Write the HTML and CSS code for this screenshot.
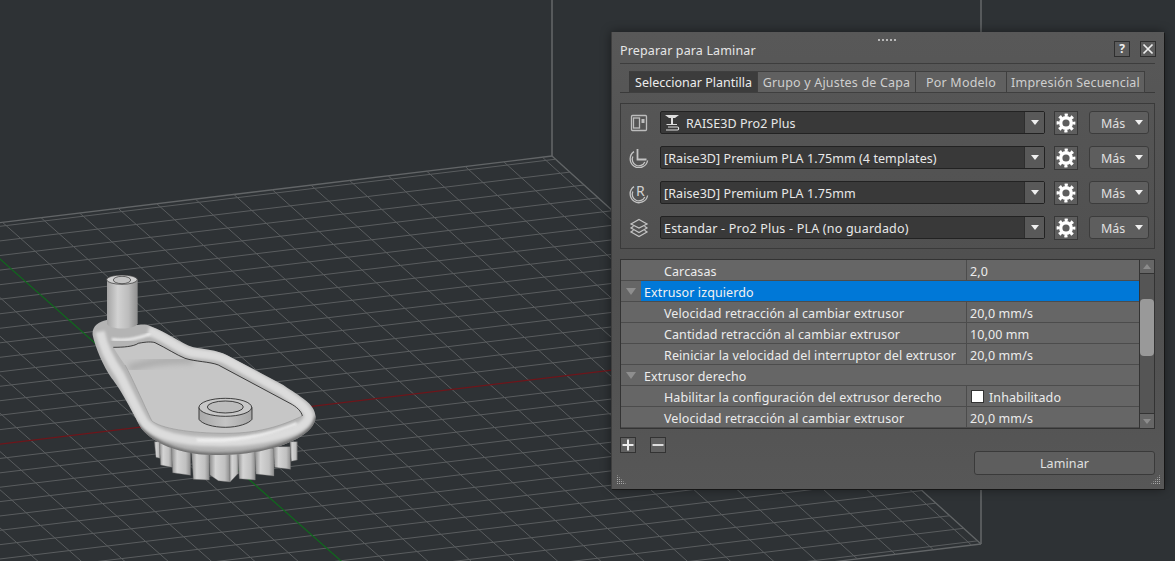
FILE: index.html
```html
<!DOCTYPE html>
<html lang="es">
<head>
<meta charset="utf-8">
<title>Preparar para Laminar</title>
<link rel="stylesheet" href="styles.css">
</head>
<body>
<svg class="scene" width="1175" height="561" viewBox="0 0 1175 561" xmlns="http://www.w3.org/2000/svg">
  <defs>
    <filter id="b2"><feGaussianBlur stdDeviation="3"/></filter>
    <filter id="b5"><feGaussianBlur stdDeviation="5"/></filter>
    <filter id="b9"><feGaussianBlur stdDeviation="9"/></filter>
    <linearGradient id="cyl" x1="0" x2="1" y1="0" y2="0">
      <stop offset="0" stop-color="#a4a4a4"/><stop offset=".35" stop-color="#d2d2d2"/><stop offset=".7" stop-color="#bcbcbc"/><stop offset="1" stop-color="#8e8e8e"/>
    </linearGradient>
    <linearGradient id="boss" x1="0" x2="1" y1="0" y2="0">
      <stop offset="0" stop-color="#a8a8a8"/><stop offset=".5" stop-color="#c4c4c4"/><stop offset="1" stop-color="#a6a6a6"/>
    </linearGradient>
    <linearGradient id="tooth" x1="0" x2="1" y1="0" y2="0">
      <stop offset="0" stop-color="#8a8a8a"/><stop offset=".3" stop-color="#d4d4d4"/><stop offset=".75" stop-color="#c0c0c0"/><stop offset="1" stop-color="#8c8c8c"/>
    </linearGradient>
    <clipPath id="rimclip"><path d="M110 180C85 185 65 200 68 225C75 260 100 320 125 355C150 385 190 460 205 490C225 535 310 585 430 585C570 590 735 540 737 470C735 430 690 410 640 375L470 285C440 270 400 268 370 262C330 250 290 215 240 198C225 190 205 195 200 195Z"/></clipPath>
  </defs>

  <g id="grid"></g>
  <g class="wall">
    <line x1="552" y1="0" x2="552" y2="156"/>
    <line x1="981" y1="0" x2="981" y2="544"/>
  </g>

  <g class="part" transform="translate(70 260) scale(.3333)">
    <g class="teeth">
      <path d="M253 545H270V595L258 592Z"/>
      <path d="M268 550H306V622L272 615Z"/>
      <path d="M304 560H362V646L308 638Z"/>
      <path d="M364 565H418V660L370 658Z"/>
      <path d="M418 570H480V666L445 662L420 645Z"/>
      <path d="M478 570H505V640L480 666Z"/>
      <path d="M503 570H556V660L508 656Z"/>
      <path d="M554 565H612V648L558 642Z"/>
      <path d="M610 560H662V628L614 622Z"/>
      <path d="M660 545H682V600L664 604Z"/>
    </g>
    <path class="rim-base" d="M110 180C85 185 65 200 68 225C75 260 100 320 125 355C150 385 190 460 205 490C225 535 310 585 430 585C570 590 735 540 737 470C735 430 690 410 640 375L470 285C440 270 400 268 370 262C330 250 290 215 240 198C225 190 205 195 200 195Z"/>
    <g clip-path="url(#rimclip)">
      <path class="rim-dark" filter="url(#b5)" d="M205 490C225 535 310 585 430 585C570 590 735 540 737 470"/>
      <path class="rim-light" filter="url(#b5)" d="M90 215C100 265 125 310 150 345C175 395 200 450 225 490C260 525 330 545 430 545C560 550 705 520 717 470C712 440 680 425 640 395L470 300C430 280 390 285 360 277C320 265 280 225 235 212"/>
      <path class="rim-glint" filter="url(#b2)" d="M380 540C470 545 570 535 680 490"/>
      <path class="rim-glint" filter="url(#b2)" d="M125 238C160 243 190 240 240 222"/>
    </g>
    <path class="floor" d="M130 262C160 262 190 260 205 250C230 245 245 245 255 248C290 265 320 285 345 295C375 305 420 305 445 315L660 430C680 440 695 455 697 468C650 490 580 520 470 520C360 520 270 505 245 482C225 440 180 340 165 315C155 300 140 280 130 262Z"/>
    <path class="floor-band" filter="url(#b9)" d="M175 325C230 308 300 298 370 300"/>
    <path class="edge" d="M130 262C160 262 190 260 205 250C230 245 245 245 255 248C290 265 320 285 345 295C375 305 420 305 445 315L660 430C680 440 695 455 697 468"/>
    <path class="edge-thin" d="M697 468C650 490 580 520 470 520C360 520 270 505 245 482C225 440 180 340 165 315"/>

    <path class="boss-side" d="M387 442V478C395 492 430 502 466 502C505 502 538 490 546 478V442Z"/>
    <ellipse class="boss-top" cx="466" cy="442" rx="79" ry="27"/>
    <ellipse class="boss-hole" cx="466" cy="441" rx="54" ry="18"/>

    <path class="cyl-side" d="M111 58V192C120 210 190 210 203 192V58Z"/>
    <ellipse class="cyl-top" cx="156" cy="59" rx="46" ry="14"/>
    <ellipse class="cyl-hole" cx="156" cy="60" rx="26" ry="11"/>
  </g>
</svg>

<svg class="defs" width="0" height="0" xmlns="http://www.w3.org/2000/svg">
  <symbol id="gear" viewBox="0 0 20 20">
    <circle cx="10" cy="10" r="5.3" fill="none" stroke="#fff" stroke-width="3.4"/>
    <circle cx="10" cy="10" r="7.9" fill="none" stroke="#fff" stroke-width="3" stroke-dasharray="3.1 3.1" stroke-dashoffset="1.55"/>
  </symbol>
</svg>

<section class="dialog">
  <div class="handle"></div>
  <header class="titlebar">
    <h1 class="title">Preparar para Laminar</h1>
    <div class="winbtns">
      <button class="winbtn">?</button>
      <button class="winbtn winbtn-close">
        <svg width="12" height="12" viewBox="0 0 12 12"><path d="M1.5 1.5L10.500 10.500M10.500 1.500L1.500 10.500" stroke="#eee" stroke-width="1.7"/></svg>
      </button>
    </div>
  </header>

  <nav class="tabs">
    <a class="tab tab-on tab-1">Seleccionar Plantilla</a>
    <a class="tab tab-2">Grupo y Ajustes de Capa</a>
    <a class="tab tab-3">Por Modelo</a>
    <a class="tab tab-4">Impresión Secuencial</a>
  </nav>

  <div class="group">
    <div class="prow">
      <svg class="picon picon-box" width="18" height="18" viewBox="0 0 18 18">
        <rect x="1.500" y="1.500" width="15" height="15" rx="1" fill="none" stroke="#bdbdbd" stroke-width="1.300"/>
        <rect x="3.500" y="4" width="6" height="10" fill="none" stroke="#bdbdbd" stroke-width="1.300"/>
        <rect x="11.500" y="5" width="3" height="4" fill="#bdbdbd"/>
      </svg>
      <div class="combo">
        <svg class="printer" width="16" height="18" viewBox="0 0 16 18">
          <path d="M1 1H15L11 4H9V10H7V4H5Z" fill="#ddd"/>
          <path d="M2.500 10.500H13M4 13H13.500C15 13 15 16 13.500 16H2" fill="none" stroke="#ddd" stroke-width="1.200"/>
        </svg>
        <span class="combo-text">RAISE3D Pro2 Plus</span>
        <span class="combo-arrow"><i class="tri"></i></span>
      </div>
      <button class="gearbtn"><svg width="20" height="20"><use href="#gear"/></svg></button>
      <button class="more"><span class="more-text">Más</span><i class="tri"></i></button>
    </div>
    <div class="prow">
      <svg class="picon" width="20" height="20" viewBox="0 0 20 20">
        <path d="M5 3.600A8.800 8.800 0 1 0 18.600 12.500" fill="none" stroke="#c4c4c4" stroke-width="1.300"/>
        <path d="M3.800 8.500A6.400 6.400 0 0 0 15.800 14" fill="none" stroke="#c4c4c4" stroke-width="1.300"/>
        <path d="M8.500 1V11.500H17.500" fill="none" stroke="#c4c4c4" stroke-width="1.800"/>
      </svg>
      <div class="combo"><span class="combo-text">[Raise3D] Premium PLA 1.75mm (4 templates)</span><span class="combo-arrow"><i class="tri"></i></span></div>
      <button class="gearbtn"><svg width="20" height="20"><use href="#gear"/></svg></button>
      <button class="more"><span class="more-text">Más</span><i class="tri"></i></button>
    </div>
    <div class="prow">
      <svg class="picon picon-tall" width="20" height="28" viewBox="0 -4 20 28">
        <path d="M5 3.600A8.800 8.800 0 1 0 18.600 12.500" fill="none" stroke="#c4c4c4" stroke-width="1.300"/>
        <path d="M3.800 8.500A6.400 6.400 0 0 0 15.800 14" fill="none" stroke="#c4c4c4" stroke-width="1.300"/>
        <text x="7" y="12.500" class="picon-letter">R</text>
      </svg>
      <div class="combo"><span class="combo-text">[Raise3D] Premium PLA 1.75mm</span><span class="combo-arrow"><i class="tri"></i></span></div>
      <button class="gearbtn"><svg width="20" height="20"><use href="#gear"/></svg></button>
      <button class="more"><span class="more-text">Más</span><i class="tri"></i></button>
    </div>
    <div class="prow">
      <svg class="picon" width="20" height="20" viewBox="0 0 20 20">
        <g fill="none" stroke="#c4c4c4" stroke-width="1.200">
          <path d="M10 1.500L18 6L10 10L2 6Z"/>
          <path d="M4.500 8.300L2 10L10 14.500L18 10L15.500 8.300"/>
          <path d="M4.500 12.300L2 14L10 18.500L18 14L15.500 12.300"/>
        </g>
      </svg>
      <div class="combo"><span class="combo-text combo-text-wide">Estandar - Pro2 Plus - PLA (no guardado)</span><span class="combo-arrow"><i class="tri"></i></span></div>
      <button class="gearbtn"><svg width="20" height="20"><use href="#gear"/></svg></button>
      <button class="more"><span class="more-text">Más</span><i class="tri"></i></button>
    </div>
  </div>

  <div class="table">
    <div class="rows">
      <div class="row"><span class="name">Carcasas</span><span class="val">2,0</span></div>
      <div class="row row-head row-sel"><i class="fold"></i><span class="head">Extrusor izquierdo</span></div>
      <div class="row"><span class="name">Velocidad retracción al cambiar extrusor</span><span class="val">20,0 mm/s</span></div>
      <div class="row"><span class="name">Cantidad retracción al cambiar extrusor</span><span class="val">10,00 mm</span></div>
      <div class="row"><span class="name">Reiniciar la velocidad del interruptor del extrusor</span><span class="val">20,0 mm/s</span></div>
      <div class="row row-head"><i class="fold"></i><span class="head">Extrusor derecho</span></div>
      <div class="row"><span class="name">Habilitar la configuración del extrusor derecho</span><span class="val"><i class="check"></i>Inhabilitado</span></div>
      <div class="row"><span class="name">Velocidad retracción al cambiar extrusor</span><span class="val">20,0 mm/s</span></div>
    </div>
    <div class="scroll">
      <span class="sbtn"><i class="stri stri-up"></i></span>
      <span class="thumb"></span>
      <span class="sbtn sbtn-down"><i class="stri stri-down"></i></span>
    </div>
  </div>

  <footer class="foot">
    <div class="pm">
      <button class="pmbtn"><svg width="14" height="14" viewBox="0 0 14 14"><path d="M7 1.500V12.500M1.500 7H12.500" stroke="#eee" stroke-width="2"/></svg></button>
      <button class="pmbtn"><svg width="14" height="14" viewBox="0 0 14 14"><path d="M1.500 7H12.500" stroke="#ddd" stroke-width="2"/></svg></button>
    </div>
    <button class="slice">Laminar</button>
  </footer>
  <i class="grip grip-l"></i>
  <i class="grip grip-r"></i>
</section>
<script src="grid.js"></script>
</body>
</html>
```

FILE: styles.css
```css
* { box-sizing: border-box; }
html, body { margin: 0; padding: 0; }
body {
  width: 1175px; height: 561px; overflow: hidden; position: relative;
  background: #2e3235;
  font-family: "Noto Sans", "Open Sans", sans-serif;
  font-size: 12px; color: #e6e6e6;
}
button { font: inherit; color: inherit; padding: 0; cursor: default; }
.defs { position: absolute; }

/* 3D viewport */
.scene { position: absolute; left: 0; top: 0; display: block; }
.grid-line { stroke: #5a5d5f; stroke-width: 1; }
.grid-edge { stroke: #626567; stroke-width: 1.3; }
.axis-x { stroke: #6f151a; stroke-width: 1.2; }
.axis-y { stroke: #0f6a1c; stroke-width: 1.2; }
.wall line { stroke: #626567; stroke-width: 1.6; }
.teeth path { fill: url(#tooth); stroke: #707070; stroke-width: 1; }
.rim-base { fill: #b4b4b4; }
.rim-dark { fill: none; stroke: #6a6a6a; stroke-width: 14; }
.rim-light { fill: none; stroke: #dcdcdc; stroke-width: 28; }
.rim-glint { fill: none; stroke: #f2f2f2; stroke-width: 9; opacity: .85; }
.floor { fill: #c6c6c6; }
.floor-band { fill: none; stroke: #a8a8a8; stroke-width: 20; }
.edge { fill: none; stroke: #1c1c1c; stroke-width: 2.4; }
.edge-thin { fill: none; stroke: #9a9a9a; stroke-width: 2; }
.boss-side { fill: url(#boss); stroke: #1c1c1c; stroke-width: 2.4; }
.boss-top { fill: #c8c8c8; stroke: #1c1c1c; stroke-width: 2.4; }
.boss-hole { fill: #bcbcbc; stroke: #1c1c1c; stroke-width: 2.4; }
.cyl-side { fill: url(#cyl); }
.cyl-top { fill: #cfcfcf; stroke: #2a2a2a; stroke-width: 2; }
.cyl-hole { fill: #c2c2c2; stroke: #2a2a2a; stroke-width: 2; }

/* dialog: a floating window over the viewport */
.dialog {
  position: absolute; left: 611px; top: 32px; width: 553px; height: 457px;
  padding: 0 9px 0 8px;
  background: linear-gradient(#585858, #4f4f4f 55%, #575757);
  border-left: 1px solid #3e3e3e;
  box-shadow: 0 0 10px rgba(0, 0, 0, .45), 1px 1px 0 #1d1d1d;
}
.handle {
  position: absolute; left: 266px; top: 7px; width: 18px; height: 2px;
  background: repeating-linear-gradient(90deg, #b8b8b8 0 2px, transparent 2px 4px);
}
.titlebar {
  display: flex; align-items: flex-start; justify-content: space-between;
  height: 32px; border-bottom: 1px solid #3d3d3d;
}
.title { margin: 10px 0 0; font-weight: 400; font-size: 12.500px; line-height: 17px; color: #e6e6e6; letter-spacing: .14px; }
.winbtns { display: flex; gap: 10px; margin-top: 9px; margin-right: -1px; }
.winbtn {
  width: 16px; height: 16px; background: #5c5c5c; border: 1px solid #2e2e2e;
  display: flex; align-items: center; justify-content: center;
  font-weight: 700; font-size: 12px; line-height: 14px; color: #eee;
}

.tabs { display: flex; height: 22px; margin-top: 7px; padding-left: 9px; border-bottom: 1px solid #3a3a3a; }
.tab {
  display: flex; align-items: center; justify-content: center; height: 22px;
  background: #606060; border: 1px solid #3f3f3f; border-left: 0;
  color: #cfcfcf; font-size: 12.500px; letter-spacing: .18px; white-space: nowrap;
}
.tab-1 { width: 129px; background: #3c3c3c; border-left: 1px solid #3a3a3a; color: #ececec; letter-spacing: 0; }
.tab-2 { width: 158px; }
.tab-3 { width: 91px; }
.tab-4 { width: 138px; }

.group {
  margin-top: 10px; height: 146px; padding: 7px 5px 0 39px;
  border: 1px solid #3a3a3a;
  display: flex; flex-direction: column; gap: 12px;
  position: relative;
}
.prow { display: flex; align-items: center; height: 23px; position: relative; }
.picon { position: absolute; left: -31px; top: 2px; }
.picon-box { left: -30px; top: 3px; }
.picon-tall { top: -2px; }
.picon-letter { font-family: "Noto Sans", sans-serif; font-size: 14px; fill: #d0d0d0; }
.combo {
  width: 385px; height: 23px; display: flex; align-items: center;
  background: #393939; border: 1px solid #222; border-radius: 2px;
  padding-left: 3px;
}
.printer { margin-right: 6px; margin-left: 0; flex: none; }
.combo-text { flex: 1; padding-top: 2px; font-size: 12.500px; letter-spacing: .08px; color: #e8e8e8; white-space: nowrap; }
.combo-text-wide { letter-spacing: .2px; }
.combo-arrow {
  width: 20px; height: 21px; background: #595959; border-left: 1px solid #2e2e2e;
  display: flex; align-items: center; justify-content: center; margin-left: auto;
}
.tri { display: block; width: 0; height: 0; border-left: 4.500px solid transparent; border-right: 4.500px solid transparent; border-top: 5px solid #f0f0f0; }
.gearbtn {
  width: 24px; height: 24px; margin-left: 9px; background: #5e5e5e; border: 1px solid #383838;
  display: flex; align-items: center; justify-content: center;
}
.more {
  width: 60px; height: 23px; margin-left: 11px;
  background: #5e5e5e; border: 1px solid #3c3c3c; border-radius: 3px;
  display: flex; align-items: center; justify-content: flex-start; gap: 10px; padding-left: 11px;
  font-size: 12.500px; color: #e0e0e0;
}
.more-text { padding-top: 2px; width: 24px; }

.table {
  display: flex; height: 170px; margin-top: 10px;
  border: 1px solid #333; background: #555;
}
.rows { flex: 1; min-width: 0; overflow: hidden; }
.row {
  display: grid; grid-template-columns: 346px 1fr; grid-template-rows: 20px; height: 21px;
  background: #666; border-bottom: 1px solid #4c4c4c;
  font-size: 12.500px; letter-spacing: .1px; line-height: 24px; color: #ececec; white-space: nowrap;
}
.name { padding-left: 43px; border-right: 1px solid #4c4c4c; overflow: hidden; }
.val { padding-left: 3px; display: flex; align-items: flex-start; }
.row-head { display: flex; align-items: stretch; }
.fold { display: block; width: 0; height: 0; margin: 7px 0 0 5px; border-left: 5px solid transparent; border-right: 5px solid transparent; border-top: 7px solid #8e8e8e; }
.head { flex: 1; margin-left: 5px; padding-left: 3px; }
.row-sel .head { background: #0078d7; color: #f2f2f2; }
.check { width: 13px; height: 13px; margin: 4px 5px 0 1px; background: #fff; border: 1px solid #333; flex: none; }

.scroll { width: 15px; display: flex; flex-direction: column; background: #555; border-left: 1px solid #333; }
.sbtn { height: 14px; background: #666; border-bottom: 1px solid #333; display: flex; align-items: center; justify-content: center; flex: none; }
.sbtn-down { border-bottom: 0; border-top: 1px solid #333; margin-top: auto; height: 15px; }
.stri { width: 0; height: 0; border-left: 4.500px solid transparent; border-right: 4.500px solid transparent; }
.stri-up { border-bottom: 5px solid #8c8c8c; }
.stri-down { border-top: 5px solid #8c8c8c; }
.thumb { height: 57px; margin-top: 25px; background: #999; border-radius: 4px; flex: none; }

.foot { display: flex; justify-content: space-between; align-items: flex-start; margin-top: 8px; }
.pm { display: flex; gap: 14px; }
.pmbtn { width: 16px; height: 16px; background: #616161; border: 1px solid #333; display: flex; align-items: center; justify-content: center; }
.slice {
  width: 181px; height: 24px; margin-top: 14px;
  background: #5e5e5e; border: 1px solid #3a3a3a; border-radius: 3px;
  font-size: 12.500px; letter-spacing: .1px; color: #e0e0e0;
}
.grip {
  position: absolute; bottom: 5px; width: 9px; height: 9px;
  background-image: radial-gradient(circle at .5px .5px, #a8a8a8 .55px, transparent .7px);
  background-size: 2px 2px;
}
.grip-l { left: 5px; clip-path: polygon(0 0, 100% 100%, 0 100%); }
.grip-r { right: 4px; clip-path: polygon(100% 0, 100% 100%, 0 100%); }
```

FILE: grid.js
```js
// Perspective build plate: 305 x 305 mm, 10 mm cells, centred axes.
(function () {
  var BR = [552, 156], FR = [981, 544], BL = [-624, 298], FL = [-179, 684];
  var SIZE = 305;

  function solve(p0, p1, p2, p3) {
    var dx1 = p1[0] - p2[0], dx2 = p3[0] - p2[0], sx = p0[0] - p1[0] + p2[0] - p3[0];
    var dy1 = p1[1] - p2[1], dy2 = p3[1] - p2[1], sy = p0[1] - p1[1] + p2[1] - p3[1];
    var det = dx1 * dy2 - dx2 * dy1;
    var g = (sx * dy2 - dx2 * sy) / det, h = (dx1 * sy - sx * dy1) / det;
    return [p1[0] - p0[0] + g * p1[0], p3[0] - p0[0] + h * p3[0], p0[0],
            p1[1] - p0[1] + g * p1[1], p3[1] - p0[1] + h * p3[1], p0[1], g, h];
  }
  var m = solve(BL, BR, FR, FL);
  function at(u, v) {
    var s = u / SIZE, t = v / SIZE, w = m[6] * s + m[7] * t + 1;
    return [(m[0] * s + m[1] * t + m[2]) / w, (m[3] * s + m[4] * t + m[5]) / w];
  }

  var host = document.getElementById('grid');
  var NS = 'http://www.w3.org/2000/svg';
  function add(a, b, cls) {
    var l = document.createElementNS(NS, 'line');
    l.setAttribute('x1', a[0].toFixed(2)); l.setAttribute('y1', a[1].toFixed(2));
    l.setAttribute('x2', b[0].toFixed(2)); l.setAttribute('y2', b[1].toFixed(2));
    l.setAttribute('class', cls);
    host.appendChild(l);
  }
  var k, p;
  add(at(0, 0), at(SIZE, 0), 'grid-edge');
  add(at(SIZE, 0), at(SIZE, SIZE), 'grid-edge');
  add(at(SIZE, SIZE), at(0, SIZE), 'grid-edge');
  add(at(0, SIZE), at(0, 0), 'grid-edge');
  for (k = 0; k <= 30; k++) {
    p = 2.5 + k * 10;
    if (k === 15) continue;
    add(at(p, 0), at(p, SIZE), 'grid-line');
    add(at(0, p), at(SIZE, p), 'grid-line');
  }
  add(at(0, 152.5), at(SIZE, 152.5), 'axis-x');
  add(at(152.5, 0), at(152.5, SIZE), 'axis-y');
})();
```
